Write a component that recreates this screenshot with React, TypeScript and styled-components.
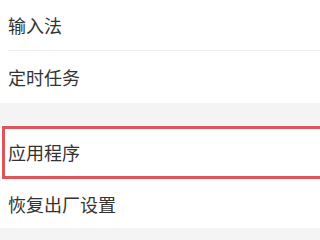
import React from "react";
import styled, { createGlobalStyle } from "styled-components";

const Global = createGlobalStyle`
  html, body { margin: 0; padding: 0; background: #f4f4f5; }
  body { font-family: "Noto Sans CJK SC", "Noto Sans", sans-serif; }
`;

const Page = styled.div`
  width: 320px;
  height: 240px;
  overflow: hidden;
  background: #f4f4f5;
  display: flex;
  flex-direction: column;
`;

const Group = styled.div<{ $gap?: number }>`
  background: #ffffff;
  margin-top: ${(p) => p.$gap ?? 0}px;
  display: flex;
  flex-direction: column;
`;

const Row = styled.div<{ $h: number; $highlight?: boolean }>`
  position: relative;
  height: ${(p) => p.$h}px;
  display: flex;
  align-items: center;
  padding-left: 8px;
  font-size: 18px;
  color: #333333;
  letter-spacing: 0px;
  ${(p) =>
    p.$highlight
      ? `&::after {
          content: "";
          position: absolute;
          left: 2px;
          right: -6px;
          top: 1px;
          bottom: 0px;
          border: 3px solid #e0555a;
          pointer-events: none;
        }`
      : ""}
`;

const Divider = styled.div`
  height: 1px;
  margin-left: 8px;
  background: #ececec;
`;

export default function App() {
  return (
    <>
      <Global />
      <Page>
        <Group>
          <Row $h={50}>输入法</Row>
          <Divider />
          <Row $h={52}>定时任务</Row>
        </Group>
        <Group $gap={22}>
          <Row $h={54} $highlight>应用程序</Row>
          <Row $h={49}>恢复出厂设置</Row>
        </Group>
      </Page>
    </>
  );
}
